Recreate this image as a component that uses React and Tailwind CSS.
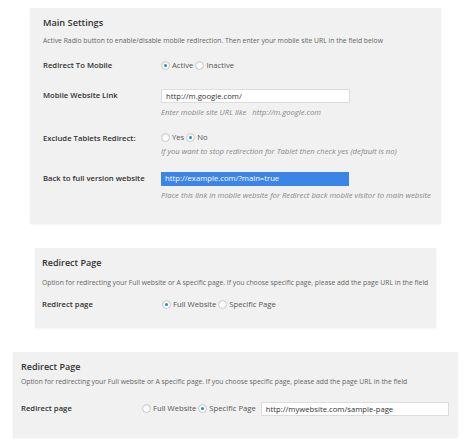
import { useState } from "react";

function Radio({ checked, label, onClick }) {
  return (
    <label className="flex items-center gap-[2px] cursor-pointer" onClick={onClick}>
      <span className="flex h-[9px] w-[9px] items-center justify-center rounded-full border border-[#c8c8c8] bg-white shadow-[inset_0_1px_2px_rgba(0,0,0,0.08)]">
        {checked && <span className="h-[3px] w-[3px] rounded-full bg-[#1e8cbe]" />}
      </span>
      <span>{label}</span>
    </label>
  );
}

function App() {
  const [redirect, setRedirect] = useState("active");
  const [tablets, setTablets] = useState("no");
  const [page1, setPage1] = useState("full");
  const [page2, setPage2] = useState("specific");

  return (
    <div
      className="min-h-screen w-full bg-white pt-[8px] text-[#333]"
      style={{ fontFamily: '"Open Sans", "Noto Sans", sans-serif' }}
    >
      {/* Main Settings */}
      <div className="ml-[30px] h-[215px] w-[411px] bg-[#f1f1f1] pl-[13px] pt-[8px] shadow-[0_1px_2px_rgba(0,0,0,0.08)]">
        <div className="h-[14px] text-[9.2px] font-semibold leading-[14px]">Main Settings</div>
        <div className="mt-[6px] h-[10px] text-[6.8px] leading-[10px] text-[#666]">
          Active Radio button to enable/disable mobile redirection. Then enter your mobile site URL in the field below
        </div>

        <div className="mt-[13px] flex h-[14px] items-center text-[7.7px]">
          <div className="w-[118px] font-semibold">Redirect To Mobile</div>
          <div className="flex items-center gap-[2px] text-[#555]">
            <Radio checked={redirect === "active"} label="Active" onClick={() => setRedirect("active")} />
            <Radio checked={redirect === "inactive"} label="Inactive" onClick={() => setRedirect("inactive")} />
          </div>
        </div>

        <div className="mt-[16px] flex text-[7.7px]">
          <div className="flex h-[14px] w-[118px] items-center font-semibold">Mobile Website Link</div>
          <div className="flex flex-col">
            <input
              type="text"
              defaultValue="http://m.google.com/"
              className="h-[14px] w-[189px] border border-[#ddd] bg-white px-[4px] text-[7.7px] text-[#333] outline-none"
            />
            <div className="mt-[4px] h-[10px] text-[7.7px] italic leading-[10px] text-[#888]">
              Enter mobile site URL like &nbsp; http://m.google.com
            </div>
          </div>
        </div>

        <div className="mt-[15px] flex text-[7.7px]">
          <div className="flex h-[14px] w-[118px] items-center font-semibold">Exclude Tablets Redirect:</div>
          <div className="flex flex-col">
            <div className="flex h-[12px] items-center gap-[2px] text-[#555]">
              <Radio checked={tablets === "yes"} label="Yes" onClick={() => setTablets("yes")} />
              <Radio checked={tablets === "no"} label="No" onClick={() => setTablets("no")} />
            </div>
            <div className="mt-[2px] h-[10px] text-[7.7px] italic leading-[10px] text-[#888]">
              If you want to stop redirection for Tablet then check yes (default is no)
            </div>
          </div>
        </div>

        <div className="mt-[16px] flex text-[7.7px]">
          <div className="flex h-[14px] w-[118px] items-center font-semibold">Back to full version website</div>
          <div className="flex flex-col">
            <div className="flex h-[14px] w-[188px] items-center bg-[#3b84e8] px-[4px] text-white">
              http://example.com/?main=true
            </div>
            <div className="mt-[4px] h-[10px] text-[7.7px] italic leading-[10px] text-[#888]">
              Place this link in mobile website for Redirect back mobile visitor to main website
            </div>
          </div>
        </div>
      </div>

      {/* Redirect Page - full website */}
      <div className="ml-[35px] mt-[25px] h-[79px] w-[401px] bg-[#f1f1f1] pl-[7px] pt-[8px] shadow-[0_1px_2px_rgba(0,0,0,0.08)]">
        <div className="h-[14px] text-[9px] font-semibold leading-[14px]">Redirect Page</div>
        <div className="mt-[8px] h-[10px] text-[6.8px] leading-[10px] text-[#666]">
          Option for redirecting your Full website or A specific page. If you choose specific page, please add the page URL in the field
        </div>
        <div className="mt-[10px] flex h-[14px] items-center text-[7.7px]">
          <div className="w-[120px] font-semibold">Redirect page</div>
          <div className="flex items-center gap-[2px] text-[#555]">
            <Radio checked={page1 === "full"} label="Full Website" onClick={() => setPage1("full")} />
            <Radio checked={page1 === "specific"} label="Specific Page" onClick={() => setPage1("specific")} />
          </div>
        </div>
      </div>

      {/* Redirect Page - specific page */}
      <div className="ml-[13px] mt-[25px] h-[85px] w-[445px] bg-[#f1f1f1] pl-[8px] pt-[8px] shadow-[0_1px_2px_rgba(0,0,0,0.08)]">
        <div className="h-[14px] text-[9px] font-semibold leading-[14px]">Redirect Page</div>
        <div className="mt-[3px] h-[10px] text-[6.8px] leading-[10px] text-[#666]">
          Option for redirecting your Full website or A specific page. If you choose specific page, please add the page URL in the field
        </div>
        <div className="mt-[15px] flex h-[14px] items-center text-[7.7px]">
          <div className="w-[121px] font-semibold">Redirect page</div>
          <div className="flex items-center gap-[2px] text-[#555]">
            <Radio checked={page2 === "full"} label="Full Website" onClick={() => setPage2("full")} />
            <Radio checked={page2 === "specific"} label="Specific Page" onClick={() => setPage2("specific")} />
            <input
              type="text"
              defaultValue="http://mywebsite.com/sample-page"
              className="ml-[3px] h-[14px] w-[188px] border border-[#ddd] bg-white px-[4px] text-[7.7px] text-[#333] outline-none"
            />
          </div>
        </div>
      </div>
    </div>
  );
}

export default App;
